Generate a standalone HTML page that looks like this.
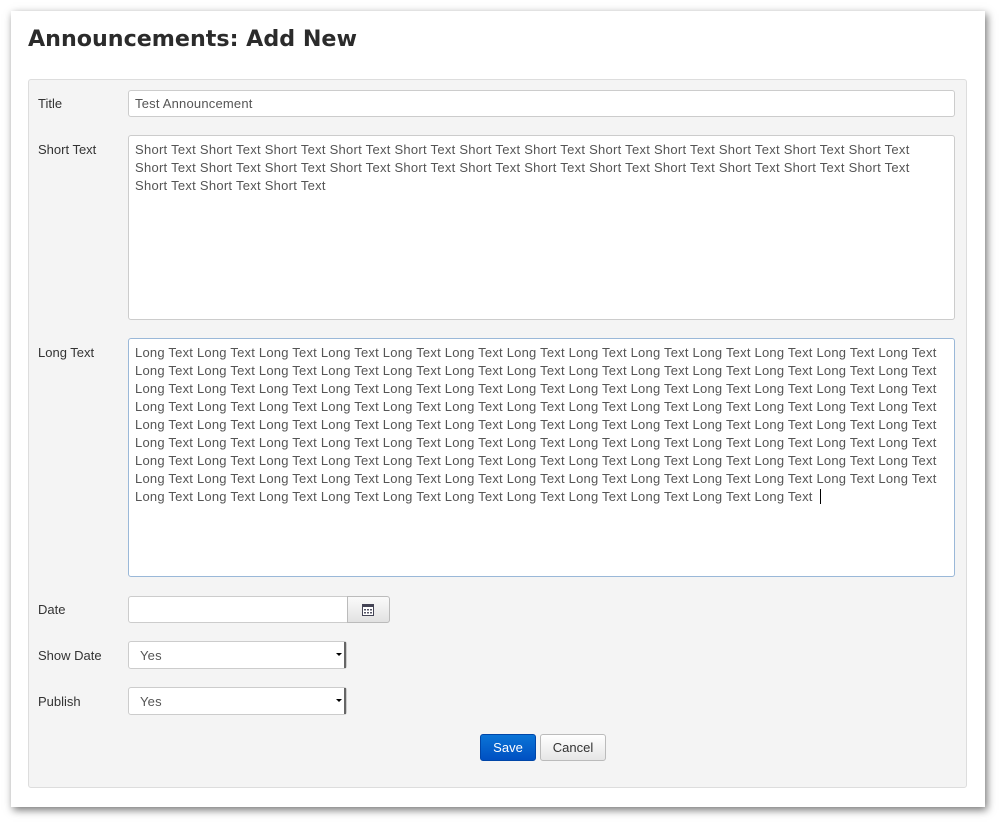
<!DOCTYPE html>
<html><head><style>
body{margin:0;width:1004px;height:826px;background:#fff;font-family:"Liberation Sans",sans-serif;position:relative;overflow:hidden}
.win{position:absolute;left:11px;top:11px;width:974px;height:796px;background:#fff;box-shadow:2px 3px 8px rgba(0,0,0,.55)}
h1{position:absolute;left:28px;top:26px;margin:0;font:bold 22.2px "DejaVu Sans",sans-serif;color:#2b2b2b}
.well{position:absolute;left:28px;top:79px;width:937px;height:707px;background:#f4f4f4;border:1px solid #ddd;border-radius:3px}
.lbl{position:absolute;left:38px;font-size:13px;color:#333}
.in{position:absolute;left:128px;background:#fff;border:1px solid #ccc;border-radius:3px;box-sizing:border-box;font-size:13px;color:#555;padding:0 6px;letter-spacing:.2px}
.ta{line-height:18px;padding-top:5px;white-space:nowrap}
.btn{position:absolute;top:734px;height:27px;box-sizing:border-box;border-radius:3px;font-size:13px;text-align:center;line-height:25px}
.arr{position:absolute;right:4px;top:6px;width:0;height:0;border-left:3px solid transparent;border-right:3px solid transparent;border-top:3px solid #000;margin-top:5px}
.sel::after{content:"";position:absolute;right:0;top:0;bottom:0;width:2px;background:#666}
</style></head><body>
<div class="win"></div>
<h1>Announcements: Add New</h1>
<div class="well"></div>
<div class="lbl" style="top:96px">Title</div>
<div class="in" style="top:90px;width:827px;height:27px;line-height:25px">Test Announcement</div>
<div class="lbl" style="top:142px">Short Text</div>
<div class="in ta" style="top:135px;width:827px;height:185px;letter-spacing:.27px">Short Text Short Text Short Text Short Text Short Text Short Text Short Text Short Text Short Text Short Text Short Text Short Text<br>Short Text Short Text Short Text Short Text Short Text Short Text Short Text Short Text Short Text Short Text Short Text Short Text<br>Short Text Short Text Short Text</div>
<div class="lbl" style="top:345px">Long Text</div>
<div class="in ta" style="top:338px;width:827px;height:239px;border-color:#9ab8d8;letter-spacing:.22px">
Long Text Long Text Long Text Long Text Long Text Long Text Long Text Long Text Long Text Long Text Long Text Long Text Long Text<br>
Long Text Long Text Long Text Long Text Long Text Long Text Long Text Long Text Long Text Long Text Long Text Long Text Long Text<br>
Long Text Long Text Long Text Long Text Long Text Long Text Long Text Long Text Long Text Long Text Long Text Long Text Long Text<br>
Long Text Long Text Long Text Long Text Long Text Long Text Long Text Long Text Long Text Long Text Long Text Long Text Long Text<br>
Long Text Long Text Long Text Long Text Long Text Long Text Long Text Long Text Long Text Long Text Long Text Long Text Long Text<br>
Long Text Long Text Long Text Long Text Long Text Long Text Long Text Long Text Long Text Long Text Long Text Long Text Long Text<br>
Long Text Long Text Long Text Long Text Long Text Long Text Long Text Long Text Long Text Long Text Long Text Long Text Long Text<br>
Long Text Long Text Long Text Long Text Long Text Long Text Long Text Long Text Long Text Long Text Long Text Long Text Long Text<br>
Long Text Long Text Long Text Long Text Long Text Long Text Long Text Long Text Long Text Long Text Long Text &nbsp;<span style="border-left:1px solid #000"></span></div>
<div class="lbl" style="top:602px">Date</div>
<div class="in" style="top:596px;width:220px;height:27px;border-radius:3px 0 0 3px"></div>
<div style="position:absolute;left:347px;top:596px;width:43px;height:27px;box-sizing:border-box;border:1px solid #bbb;border-radius:0 3px 3px 0;background:linear-gradient(#fafafa,#e2e2e2)">
<svg style="position:absolute;left:14px;top:6px" width="12" height="13" viewBox="0 0 12 13"><rect x="0.5" y="1.5" width="11" height="11" fill="#fff" stroke="#445"/><rect x="0" y="1" width="12" height="3" fill="#445"/><g fill="#556"><rect x="2" y="6" width="2" height="1.5"/><rect x="5" y="6" width="2" height="1.5"/><rect x="8" y="6" width="2" height="1.5"/><rect x="2" y="9" width="2" height="1.5"/><rect x="5" y="9" width="2" height="1.5"/><rect x="8" y="9" width="2" height="1.5"/></g></svg></div>
<div class="lbl" style="top:648px">Show Date</div>
<div class="in sel" style="top:641px;width:219px;height:28px;line-height:27px;padding-left:11px">Yes<span class="arr"></span></div>
<div class="lbl" style="top:694px">Publish</div>
<div class="in sel" style="top:687px;width:219px;height:28px;line-height:27px;padding-left:11px">Yes<span class="arr"></span></div>
<div class="btn" style="left:480px;width:56px;background:linear-gradient(#0a74d6,#0050c2);border:1px solid #0046a8;color:#fff">Save</div>
<div class="btn" style="left:540px;width:66px;background:linear-gradient(#fff,#e6e6e6);border:1px solid #bbb;color:#333">Cancel</div>
</body></html>
